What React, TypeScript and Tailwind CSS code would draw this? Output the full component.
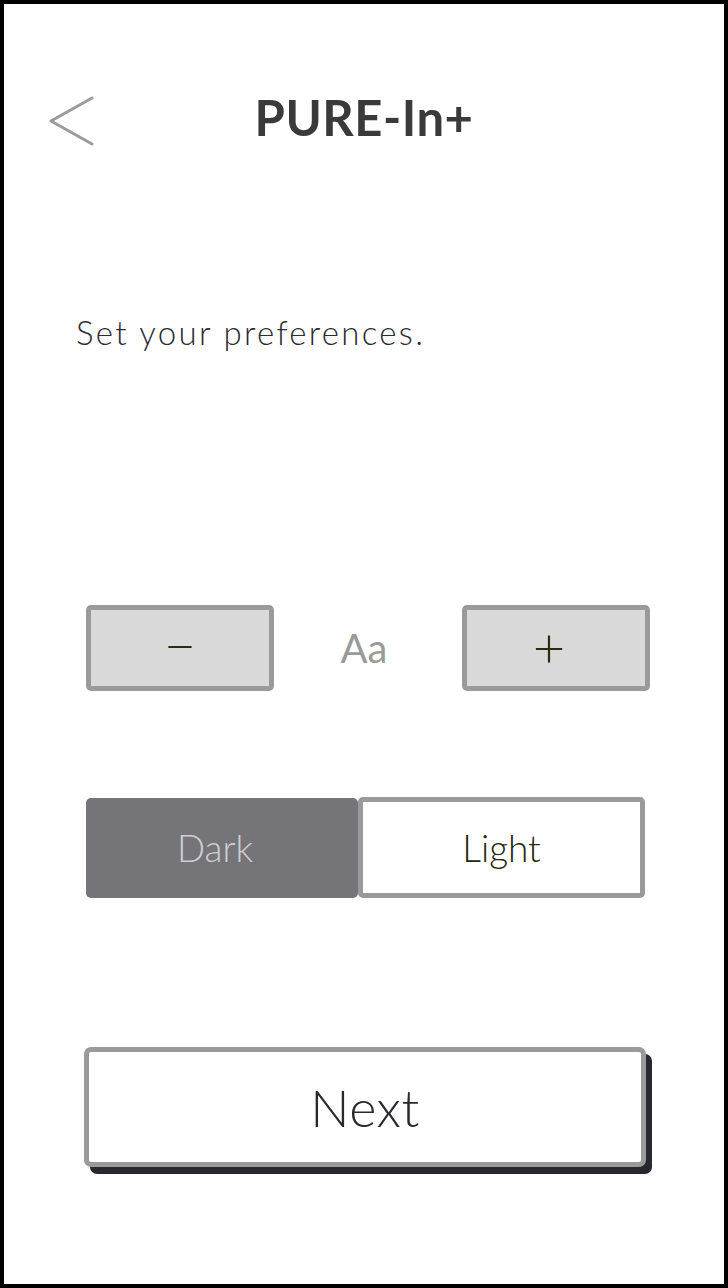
import React from 'react';

const font = "font-['Lato','Noto_Sans',sans-serif]";

const BackChevron: React.FC = () => (
    <svg width="48" height="50" viewBox="0 0 48 50" fill="none" className="block">
        <polyline points="44,2 3,25 44,48" stroke="#9b9b9b" strokeWidth="3" strokeLinecap="round" strokeLinejoin="round" />
    </svg>
);

const StepButton: React.FC<{ label: string; extra?: string }> = ({ label, extra = '' }) => (
    <button className={`h-[86px] w-[188px] rounded-[5px] border-[5px] border-[#9a9a9a] bg-[#d9d9d9] flex items-center justify-center text-[56px] font-light leading-none text-[#2b2b10] ${extra}`}>
        {label}
    </button>
);

const App: React.FC = () => {
    return (
        <div className={`w-[728px] h-[1288px] box-border border-4 border-black bg-white flex flex-col ${font}`}>
            <div className="mt-[92px] grid grid-cols-[1fr_auto_1fr] grid-rows-[50px] items-center">
                <div className="pl-[44px]">
                    <BackChevron />
                </div>
                <h1 className="mb-[8px] text-[49px] font-bold leading-none text-[#3a3a3c] tracking-[0.5px]">PURE-In+</h1>
                <div />
            </div>

            <p className="mt-[170px] pl-[72px] text-[33px] font-light leading-none text-[#2a2a31] tracking-[2.3px]">Set your preferences.</p>

            <div className="mt-[256px] ml-[82px] w-[564px] grid grid-cols-[188px_1fr_188px] items-center">
                <StepButton label="−" extra="pb-[6px]" />
                <span className="text-center pr-2 text-[40px] leading-none text-[#9a9a9a]">Aa</span>
                <StepButton label="+" extra="pr-[14px] pb-[2px]" />
            </div>

            <div className="mt-[106px] ml-[82px] flex items-center">
                <button className="h-[100px] w-[272px] rounded-[5px] bg-[#757478] pr-[14px] text-[37px] font-light text-[#cfcfcf]">Dark</button>
                <button className="h-[101px] w-[287px] rounded-[5px] border-[5px] border-[#9a9a9a] bg-white text-[37px] font-light text-[#26260e]">Light</button>
            </div>

            <div className="mt-[149px] ml-[80px]">
                <button className="h-[120px] w-[562px] rounded-[7px] border-[5px] border-[#9a9a9a] bg-white shadow-[6px_7px_0_0_#28282f] text-[52px] font-light tracking-[0.5px] text-[#28282f]">
                    Next
                </button>
            </div>
        </div>
    );
};

export default App;
